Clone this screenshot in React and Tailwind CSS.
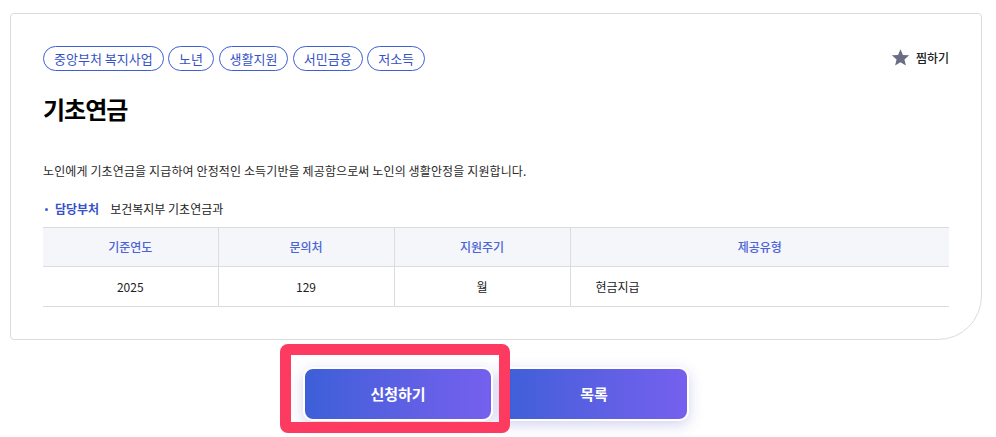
import React from "react";

const tags = ["중앙부처 복지사업", "노년", "생활지원", "서민금융", "저소득"];

function StarIcon() {
    return (
        <svg width="19" height="19" viewBox="0 0 24 24" className="fill-[#6b6d85]">
            <path d="M12 1.5l3.1 7.2 7.8.6-5.9 5.1 1.8 7.6L12 17.9l-6.8 4.1 1.8-7.6L1.1 9.3l7.8-.6z" />
        </svg>
    );
}

export default function App() {
    return (
        <div className="min-h-screen bg-white pt-[13px] pl-[10px] pr-[14px] font-['Noto_Sans_CJK_KR','Noto_Sans',sans-serif]">
            <div className="border border-[#dcdcdc] rounded-tl-[4px] rounded-tr-[4px] rounded-bl-[4px] rounded-br-[44px] bg-white px-[32px] pt-[32px] pb-[32px]">
                <div className="flex items-start justify-between">
                    <div className="flex gap-[4.5px]">
                        {tags.map((t) => (
                            <span
                                key={t}
                                className="h-[25px] px-[10px] flex items-center rounded-full border border-[#3f5ed6] text-[#3552c8] text-[13px] leading-none"
                            >
                                {t}
                            </span>
                        ))}
                    </div>
                    <button className="flex items-center gap-[6px] mt-[2px] text-[12px] text-[#222] font-medium">
                        <StarIcon />
                        <span>찜하기</span>
                    </button>
                </div>

                <h1 className="mt-[22px] text-[24px] leading-[32px] font-bold text-black tracking-[-1px]">
                    기초연금
                </h1>

                <p className="mt-[37px] text-[12px] leading-[18px] text-[#2a2a2a] tracking-[0.12px]">
                    노인에게 기초연금을 지급하여 안정적인 소득기반을 제공함으로써 노인의 생활안정을 지원합니다.
                </p>

                <div className="mt-[20px] flex items-center text-[12px] leading-[18px]">
                    <span className="w-[3px] h-[3px] rounded-full bg-[#3f5ed6] ml-[2px] mr-[7px]"></span>
                    <span className="text-[#3552c8] font-bold">담당부처</span>
                    <span className="ml-[11px] text-[#222]">보건복지부 기초연금과</span>
                </div>

                <table className="mt-[9px] w-full border-collapse text-[12px] table-fixed">
                    <colgroup>
                        <col className="w-[175px]" />
                        <col className="w-[176px]" />
                        <col className="w-[176px]" />
                        <col />
                    </colgroup>
                    <thead>
                        <tr className="bg-[#f5f6fa] border-t border-b border-[#dcdcdc] h-[39px]">
                            <th className="font-medium text-[#4a63d8] border-r border-[#dcdcdc]">기준연도</th>
                            <th className="font-medium text-[#4a63d8] border-r border-[#dcdcdc]">문의처</th>
                            <th className="font-medium text-[#4a63d8] border-r border-[#dcdcdc]">지원주기</th>
                            <th className="font-medium text-[#4a63d8]">제공유형</th>
                        </tr>
                    </thead>
                    <tbody>
                        <tr className="border-b border-[#dcdcdc] h-[40px] text-[#222]">
                            <td className="text-center border-r border-[#dcdcdc]">2025</td>
                            <td className="text-center border-r border-[#dcdcdc]">129</td>
                            <td className="text-center border-r border-[#dcdcdc]">월</td>
                            <td className="pl-[25px]">현금지급</td>
                        </tr>
                    </tbody>
                </table>
            </div>

            <div className="mt-[27px] flex justify-center gap-[6px]">
                <div className="relative">
                    <button className="w-[190px] h-[54px] rounded-[10px] border-2 border-white bg-gradient-to-r from-[#3c5fd8] to-[#7560ee] text-white text-[15px] font-bold shadow-[0_4px_14px_rgba(80,80,200,0.25)]">
                        신청하기
                    </button>
                    <div className="absolute left-[-23px] top-[-23px] w-[230px] h-[89px] rounded-[8px] border-[11px] border-[#fd3a5f] pointer-events-none"></div>
                </div>
                <button className="w-[190px] h-[54px] rounded-[10px] border-2 border-white bg-gradient-to-r from-[#3c5fd8] to-[#7560ee] text-white text-[15px] font-bold shadow-[0_4px_14px_rgba(80,80,200,0.25)]">
                    목록
                </button>
            </div>
        </div>
    );
}
